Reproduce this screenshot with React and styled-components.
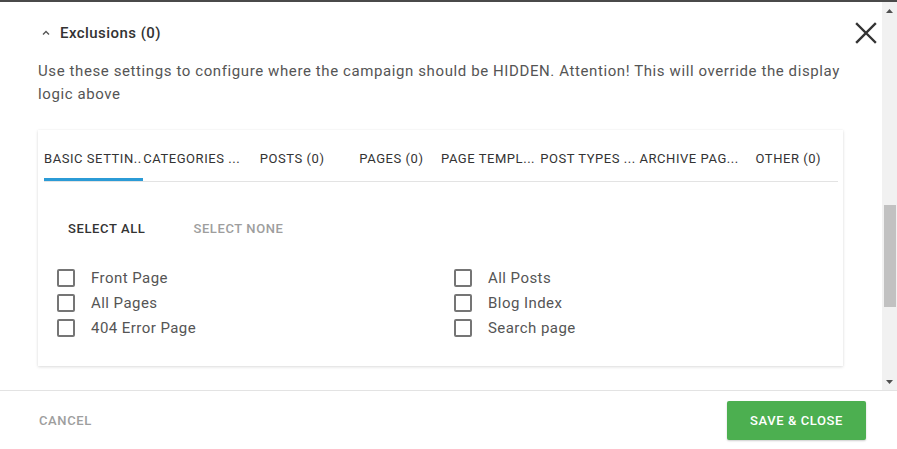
import React from "react";
import styled, { createGlobalStyle } from "styled-components";

const Global = createGlobalStyle`
  html, body { margin: 0; padding: 0; background: #fff; }
  body { width: 897px; height: 449px; overflow: hidden; font-family: Roboto, "Liberation Sans", Arial, sans-serif; }
  * { box-sizing: border-box; }
`;

const Modal = styled.div`
  width: 897px;
  height: 449px;
  display: flex;
  flex-direction: column;
  background: #fff;
`;

const Main = styled.div`
  height: 390px;
  display: flex;
  border-top: 2px solid #4a4a4a;
`;

const Content = styled.div`
  flex: 1;
  min-width: 0;
  padding: 0 39px 0 38px;
`;

const Header = styled.div`
  display: flex;
  align-items: center;
  justify-content: space-between;
  padding: 20px 0 0 4px;
  margin-right: -34px;
`;

const Title = styled.button`
  display: flex;
  align-items: center;
  gap: 10px;
  border: 0;
  background: none;
  padding: 0;
  font: 500 15px/20px Roboto, "Liberation Sans", sans-serif;
  letter-spacing: 0.45px;
  color: #333;
  cursor: pointer;
`;

const Close = styled.button`
  width: 22px;
  height: 22px;
  border: 0;
  background: none;
  padding: 0;
  display: flex;
  align-items: center;
  justify-content: center;
  cursor: pointer;
`;

const Description = styled.p`
  margin: 16px 0 0;
  font: 400 15px/23px Roboto, "Liberation Sans", sans-serif;
  letter-spacing: 0.6px;
  color: #555;
`;

const Card = styled.div`
  margin-top: 24px;
  background: #fff;
  box-shadow: 0 1px 3px rgba(0, 0, 0, 0.14), 0 0 1px rgba(0, 0, 0, 0.06);
  padding: 0 5px 26px 6px;
`;

const TabBar = styled.div`
  display: flex;
  height: 52px;
  border-bottom: 1px solid #e3e3e3;
`;

const Tab = styled.div`
  position: relative;
  flex: 1 1 0;
  min-width: 0;
  display: flex;
  justify-content: ${(p) => (p.$align === "left" ? "flex-start" : "center")};
  align-items: center;
  padding-top: 5px;
  white-space: nowrap;
  font: 400 13px Roboto, "Liberation Sans", sans-serif;
  letter-spacing: 0.55px;
  color: #333;
  &::after {
    content: "";
    display: ${(p) => (p.$active ? "block" : "none")};
    position: absolute;
    left: 0;
    right: 0;
    bottom: 0;
    height: 3px;
    background: #2b9bd6;
  }
`;

const SelectRow = styled.div`
  display: flex;
  gap: 16px;
  margin: 28px 0 0 8px;
`;

const TextButton = styled.button`
  height: 36px;
  padding: 0 16px;
  border: 0;
  background: none;
  font: 500 13px Roboto, "Liberation Sans", sans-serif;
  letter-spacing: 0.6px;
  color: ${(p) => (p.$muted ? "#9e9e9e" : "#333")};
  cursor: pointer;
`;

const CheckGrid = styled.div`
  display: grid;
  grid-template-columns: 397px 1fr;
  grid-auto-flow: column;
  grid-template-rows: repeat(3, 25px);
  margin-top: 19px;
  padding-left: 13px;
`;

const CheckRow = styled.label`
  display: flex;
  align-items: center;
  gap: 16px;
  font: 400 15px Roboto, "Liberation Sans", sans-serif;
  letter-spacing: 0.45px;
  color: #555;
`;

const Box = styled.span`
  width: 18px;
  height: 18px;
  border: 2px solid #757575;
  border-radius: 2px;
  flex: none;
`;

const Scrollbar = styled.div`
  width: 15px;
  background: #f1f1f1;
  display: flex;
  flex-direction: column;
  align-items: stretch;
`;

const Arrow = styled.div`
  height: 17px;
  display: flex;
  align-items: center;
  justify-content: center;
`;

const Track = styled.div`
  flex: 1;
`;

const Thumb = styled.div`
  height: 102px;
  margin: 186px 1px 0 2px;
  background: #c1c1c1;
`;

const Footer = styled.div`
  flex: 1;
  border-top: 1px solid #e3e3e3;
  display: flex;
  align-items: center;
  justify-content: space-between;
  padding: 0 31px 0 39px;
`;

const Cancel = styled.button`
  border: 0;
  background: none;
  padding: 0;
  font: 500 13px Roboto, "Liberation Sans", sans-serif;
  letter-spacing: 0.6px;
  color: #9e9e9e;
  cursor: pointer;
`;

const Save = styled.button`
  width: 139px;
  height: 39px;
  border: 0;
  border-radius: 2px;
  background: #4caf50;
  color: #fff;
  font: 500 13px Roboto, "Liberation Sans", sans-serif;
  letter-spacing: 0.6px;
  box-shadow: 0 1px 2px rgba(0, 0, 0, 0.2);
  cursor: pointer;
`;

const tabs = [
  { label: "BASIC SETTIN..", active: true, align: "left" },
  { label: "CATEGORIES ...", align: "left" },
  { label: "POSTS (0)" },
  { label: "PAGES (0)" },
  { label: "PAGE TEMPL...", align: "left" },
  { label: "POST TYPES ...", align: "left" },
  { label: "ARCHIVE PAG...", align: "left" },
  { label: "OTHER (0)" },
];

const items = ["Front Page", "All Pages", "404 Error Page", "All Posts", "Blog Index", "Search page"];

export default function App() {
  return (
    <Modal>
      <Global />
      <Main>
        <Content>
          <Header>
            <Title>
              <svg width="8" height="6" viewBox="0 0 8 6">
                <path d="M1 4.5 L4 1.5 L7 4.5" fill="none" stroke="#555" strokeWidth="1.4" />
              </svg>
              Exclusions (0)
            </Title>
            <Close aria-label="Close">
              <svg width="22" height="22" viewBox="0 0 22 22">
                <path d="M2 2 L20 20 M20 2 L2 20" stroke="#333" strokeWidth="2.4" strokeLinecap="square" />
              </svg>
            </Close>
          </Header>
          <Description>
            Use these settings to configure where the campaign should be HIDDEN. Attention! This will override the display logic above
          </Description>
          <Card>
            <TabBar>
              {tabs.map((t) => (
                <Tab key={t.label} $active={t.active} $align={t.align}>
                  {t.label}
                </Tab>
              ))}
            </TabBar>
            <SelectRow>
              <TextButton>SELECT ALL</TextButton>
              <TextButton $muted>SELECT NONE</TextButton>
            </SelectRow>
            <CheckGrid>
              {items.map((i) => (
                <CheckRow key={i}>
                  <Box />
                  {i}
                </CheckRow>
              ))}
            </CheckGrid>
          </Card>
        </Content>
        <Scrollbar>
          <Arrow>
            <svg width="7" height="4" viewBox="0 0 7 4">
              <path d="M0 4 L3.5 0 L7 4 Z" fill="#505050" />
            </svg>
          </Arrow>
          <Track>
            <Thumb />
          </Track>
          <Arrow>
            <svg width="7" height="4" viewBox="0 0 7 4">
              <path d="M0 0 L3.5 4 L7 0 Z" fill="#505050" />
            </svg>
          </Arrow>
        </Scrollbar>
      </Main>
      <Footer>
        <Cancel>CANCEL</Cancel>
        <Save>SAVE &amp; CLOSE</Save>
      </Footer>
    </Modal>
  );
}
